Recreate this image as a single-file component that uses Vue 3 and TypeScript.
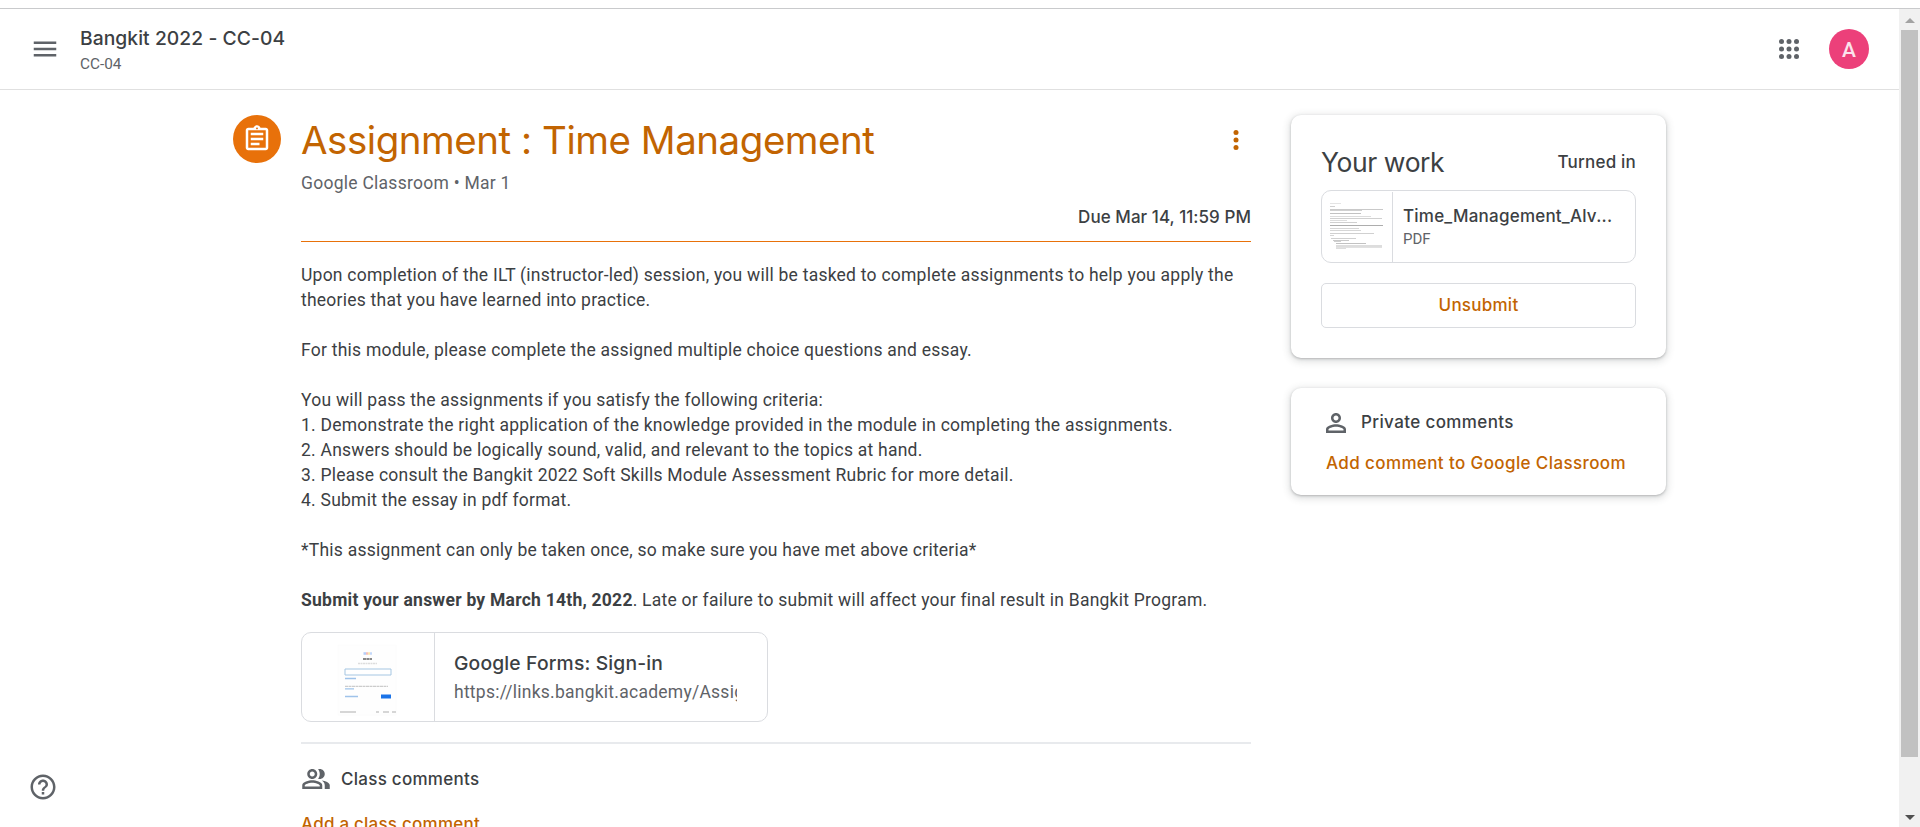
<script setup lang="ts">
interface ThumbLine { x: number; y: number; w: number; o: number }

const description: string[] = [
  'Upon completion of the ILT (instructor-led) session, you will be tasked to complete assignments to help you apply the theories that you have learned into practice.',
  '',
  'For this module, please complete the assigned multiple choice questions and essay.',
  '',
  'You will pass the assignments if you satisfy the following criteria:',
  '1. Demonstrate the right application of the knowledge provided in the module in completing the assignments.',
  '2. Answers should be logically sound, valid, and relevant to the topics at hand.',
  '3. Please consult the Bangkit 2022 Soft Skills Module Assessment Rubric for more detail.',
  '4. Submit the essay in pdf format.',
  '',
  '*This assignment can only be taken once, so make sure you have met above criteria*',
  '',
]

// Tiny text rows of the PDF preview
const thumbLines: ThumbLine[] = [
  { x: 8, y: 13, w: 11, o: 0.2 }, { x: 8, y: 16, w: 5, o: 0.35 },
  { x: 8, y: 19, w: 53, o: 0.4 }, { x: 8, y: 20, w: 32, o: 0.35 },
  { x: 8, y: 23, w: 31, o: 0.45 }, { x: 8, y: 26, w: 41, o: 0.25 },
  { x: 8, y: 28, w: 52, o: 0.35 }, { x: 8, y: 30, w: 17, o: 0.25 },
  { x: 8, y: 32, w: 27, o: 0.35 }, { x: 8, y: 35, w: 53, o: 0.6 },
  { x: 8, y: 38, w: 29, o: 0.3 }, { x: 8, y: 40, w: 31, o: 0.3 },
  { x: 8, y: 43, w: 44, o: 0.35 }, { x: 8, y: 45, w: 4, o: 0.3 },
  { x: 9, y: 48, w: 25, o: 0.35 }, { x: 11, y: 50, w: 16, o: 0.4 },
  { x: 12, y: 51, w: 7, o: 0.35 }, { x: 14, y: 53, w: 30, o: 0.45 },
  { x: 14, y: 55, w: 46, o: 0.25 }, { x: 14, y: 56, w: 46, o: 0.25 },
  { x: 14, y: 57, w: 46, o: 0.22 }, { x: 14, y: 58, w: 10, o: 0.25 },
]
</script>

<template>
  <div class="window">
    <div class="viewport">
      <div class="page">
        <header class="topbar">
          <svg class="icon" viewBox="0 0 24 24"><path d="M3 18h18v-2H3v2zm0-5h18v-2H3v2zm0-7v2h18V6H3z" /></svg>
          <div class="course">
            <div class="course-name">Bangkit 2022 - CC-04</div>
            <div class="course-section">CC-04</div>
          </div>
          <svg class="icon apps" viewBox="0 0 24 24">
            <template v-for="cy in [6, 12, 18]" :key="cy">
              <circle v-for="cx in [6, 12, 18]" :key="cx" :cx="cx" :cy="cy" r="2" />
            </template>
          </svg>
          <div class="avatar">A</div>
        </header>

        <div class="content">
          <div class="badge">
            <svg viewBox="0 0 24 24">
              <path d="M7 15h7v2H7zm0-4h10v2H7zm0-4h10v2H7z" />
              <path d="M19 3h-4.180C14.400 1.840 13.300 1 12 1s-2.400.84-2.820 2H5c-1.100 0-2 .9-2 2v14c0 1.100.9 2 2 2h14c1.100 0 2-.9 2-2V5c0-1.100-.9-2-2-2zm-7-.25c.41 0 .75.34.75.75s-.34.75-.75.75-.75-.34-.75-.75.34-.75.75-.75zM19 19H5V5h14v14z" />
            </svg>
          </div>

          <main class="main">
            <div class="title-row">
              <h1>Assignment : Time Management</h1>
              <svg class="more" viewBox="0 0 24 24"><circle cx="12" cy="6" r="2" /><circle cx="12" cy="12" r="2" /><circle cx="12" cy="18" r="2" /></svg>
            </div>
            <div class="author">Google Classroom • Mar 1</div>
            <div class="due">Due Mar 14, 11:59 PM</div>

            <div class="description">
              <div v-for="(line, i) in description" :key="i" class="line">{{ line }}</div>
              <div class="line"><b>Submit your answer by March 14th, 2022</b>. Late or failure to submit will affect your final result in Bangkit Program.</div>
            </div>

            <div class="file-card">
              <div class="file-thumb">
                <svg viewBox="0 0 132 88">
                  <path d="M36 12h58v70H36z" fill="#fefefe" stroke="#fcfcfc" />
                  <g stroke-width="2.600" opacity=".5">
                    <path d="M61.500 20.500h2.500" stroke="#6fa0f5" /><path d="M64 20.500h2" stroke="#ea8078" /><path d="M66 20.500h2" stroke="#f9cf60" /><path d="M68 20.500h2" stroke="#8ab4f8" />
                  </g>
                  <path d="M61 26h9" stroke="#888" stroke-width="1.800" stroke-dasharray="3 .4" />
                  <path d="M56 30.500h19" stroke="#ddd" stroke-width="1.400" stroke-dasharray="2 .5" />
                  <path d="M43 36h46v6H43z" fill="#fff" stroke="#a5c6e2" />
                  <path d="M43 45.500h11M43 55.800h9M43 63.500h13" stroke="#9fc3ea" stroke-width="1.300" />
                  <path d="M43 53.300h43" stroke="#ccc" stroke-width="1.300" stroke-dasharray="3 .5" />
                  <path d="M79 61.500h10v4H79z" fill="#1a73e8" />
                  <path d="M38 79h16M74 79h3M81 79h6M90 79h4" stroke="#c9c9c9" stroke-width="1.300" />
                </svg>
              </div>
              <div class="file-info">
                <div class="file-name">Google Forms: Sign-in</div>
                <div class="file-url">https://links.bangkit.academy/Assig</div>
              </div>
            </div>

            <section class="class-comments">
              <div class="comments-head">
                <svg class="icon" viewBox="0 0 24 24">
                  <path d="M16.670 13.130C18.040 14.060 19 15.320 19 17v3h4v-3c0-2.180-3.570-3.470-6.330-3.870zM15 12c2.210 0 4-1.790 4-4s-1.790-4-4-4c-.47 0-.91.1-1.330.24C14.500 5.270 15 6.580 15 8s-.5 2.730-1.330 3.760c.42.14.86.24 1.330.24z" />
                  <path d="M9 12c2.210 0 4-1.790 4-4s-1.790-4-4-4-4 1.790-4 4 1.790 4 4 4zm0-6c1.100 0 2 .9 2 2s-.9 2-2 2-2-.9-2-2 .9-2 2-2zm0 7c-2.670 0-8 1.340-8 4v3h16v-3c0-2.660-5.330-4-8-4zm6 5H3v-.99C3.200 16.290 6.300 15 9 15s5.800 1.290 6 2v1z" />
                </svg>
                <span class="class-label">Class comments</span>
              </div>
              <div class="add-class">Add a class comment</div>
            </section>
          </main>

          <aside class="side">
            <section class="card work">
              <div class="work-head">
                <h2>Your work</h2>
                <span class="state">Turned in</span>
              </div>
              <div class="attachment">
                <div class="pdf-thumb">
                  <svg viewBox="0 0 70 71">
                    <rect v-for="(l, i) in thumbLines" :key="i" :x="l.x" :y="l.y - 1" :width="l.w" height="1" :opacity="l.o" />
                  </svg>
                </div>
                <div class="pdf-info">
                  <div class="pdf-name">Time_Management_Alv...</div>
                  <div class="pdf-type">PDF</div>
                </div>
              </div>
              <button class="unsubmit">Unsubmit</button>
            </section>

            <section class="card private">
              <div class="private-head">
                <svg class="icon" viewBox="0 0 24 24"><path d="M12 4C9.790 4 8 5.790 8 8s1.790 4 4 4 4-1.790 4-4-1.790-4-4-4zm0 6c-1.100 0-2-.9-2-2s.9-2 2-2 2 .9 2 2-.9 2-2 2zM12 13c-2.670 0-8 1.340-8 4v3h16v-3c0-2.660-5.330-4-8-4zm6 5H6v-.99C6.200 16.290 9.300 15 12 15s5.800 1.290 6 2v1z" /></svg>
                <span>Private comments</span>
              </div>
              <div class="add-private">Add comment to Google Classroom</div>
            </section>
          </aside>
        </div>

        <svg class="icon help" viewBox="0 0 24 24"><path d="M11 18h2v-2h-2v2zm1-16C6.480 2 2 6.480 2 12s4.480 10 10 10 10-4.480 10-10S17.520 2 12 2zm0 18c-4.410 0-8-3.590-8-8s3.590-8 8-8 8 3.590 8 8-3.590 8-8 8zm0-14c-2.210 0-4 1.790-4 4h2c0-1.100.9-2 2-2s2 .9 2 2c0 2-3 1.750-3 5h2c0-2.250 3-2.500 3-5 0-2.210-1.790-4-4-4z" /></svg>
      </div>

      <div class="scrollbar">
        <svg class="arrow up" viewBox="0 0 10 5"><path d="M0 5L5 0l5 5z" /></svg>
        <div class="thumb"></div>
        <svg class="arrow down" viewBox="0 0 10 5"><path d="M0 0h10L5 5z" /></svg>
      </div>
    </div>
  </div>
</template>

<style>
body { background: #fff; overflow: hidden; }
</style>

<style scoped>
* { box-sizing: border-box; }
.window { width: 1920px; height: 827px; padding-top: 8px; overflow: hidden; color: #3c4043; font-family: Inter, "Open Sans", sans-serif; font-size: 17px; font-weight: 450; line-height: 24px; }
.viewport { display: flex; height: 819px; border-top: 1px solid #c9cacc; }
.page { position: relative; flex: 1; height: 818px; overflow: hidden; }
svg { display: block; }
.icon { width: 30px; height: 30px; fill: #5f6368; flex: none; }

.topbar { display: flex; align-items: center; height: 81px; padding: 0 30px; border-bottom: 1px solid #e0e0e0; }
.course { margin-left: 20px; padding-top: 1px; }
.course-name { font-size: 19.3px; letter-spacing: 0.05px; }
.course-section { margin-top: 4px; font: 400 15.3px/20px Roboto, sans-serif; color: #5f6368; }
.apps { margin-left: auto; }
.avatar { display: flex; align-items: center; justify-content: center; width: 40px; height: 40px; margin-left: 25px; padding-top: 2px; border-radius: 50%; background: #ec407a; color: #fbe3ec; font: 500 21px/24px Roboto, sans-serif; }

.content { display: flex; align-items: flex-start; padding: 25px 0 0 233px; }
.badge { display: flex; align-items: center; justify-content: center; width: 48px; height: 48px; border-radius: 50%; background: #e8710a; }
.badge svg { width: 30px; height: 30px; fill: #fff; }
.main { width: 950px; margin-left: 20px; }
.title-row { display: flex; justify-content: space-between; height: 50px; }
h1 { margin: 0; font-size: 38.5px; font-weight: 400; line-height: 50px; letter-spacing: -0.47px; color: #c26401; white-space: nowrap; }
.more { width: 30px; height: 30px; margin-top: 10px; fill: #c26401; }
.author { margin-top: 6px; font: 400 17.5px/25px Roboto, sans-serif; letter-spacing: 0.26px; color: #5f6368; }
.due { margin-top: 9px; padding-bottom: 12px; border-bottom: 1px solid #e8710a; letter-spacing: 0.05px; text-align: right; }
.description { margin-top: 21px; font: 400 17.5px/25px Roboto, sans-serif; letter-spacing: 0.24px; }
.line { min-height: 25px; }
b { font-weight: 700; }

.file-card { display: flex; width: 467px; height: 90px; margin-top: 19px; border: 1px solid #dadce0; border-radius: 10px; overflow: hidden; }
.file-thumb { width: 133px; border-right: 1px solid #dadce0; }
.file-info { display: flex; flex-direction: column; gap: 5px; width: 302px; padding: 18px 0 0 19px; overflow: hidden; }
.file-name { font-size: 19.3px; letter-spacing: 0.16px; white-space: nowrap; }
.file-url { font: 400 17.5px/24px Roboto, sans-serif; letter-spacing: 0.25px; color: #5f6368; white-space: nowrap; overflow: hidden; }

.class-comments { margin-top: 20px; padding-top: 20px; border-top: 2px solid #e8eaed; }
.comments-head { display: flex; gap: 10px; }
.class-label { margin-top: 3px; letter-spacing: 0.27px; }
.add-class { margin-top: 18px; letter-spacing: 0.23px; color: #c26401; }

.side { width: 375px; margin-left: 40px; }
.card { border-radius: 10px; background: #fff; box-shadow: 0 1px 2.5px rgba(60, 64, 67, .3), 0 2px 7px 2px rgba(60, 64, 67, .15); }
.work { height: 243px; padding: 30px; }
.work-head { display: flex; align-items: center; justify-content: space-between; }
h2 { margin: 0; font-size: 26.5px; font-weight: 400; line-height: 34px; letter-spacing: -0.42px; }
.state { letter-spacing: 0.2px; }
.attachment { display: flex; height: 73px; margin-top: 11px; border: 1px solid #dadce0; border-radius: 10px; overflow: hidden; }
.pdf-thumb { width: 71px; margin-top: 1px; border-right: 1px solid #dadce0; }
.pdf-thumb svg { width: 70px; height: 71px; margin-top: -1px; fill: #777; }
.pdf-info { display: flex; flex-direction: column; justify-content: center; gap: 1px; padding-left: 10px; }
.pdf-name { letter-spacing: 0.22px; white-space: nowrap; }
.pdf-type { font: 400 15px/20px Roboto, sans-serif; color: #5f6368; }
.unsubmit { display: block; width: 100%; height: 45px; margin-top: 20px; padding: 0 0 2px; border: 1px solid #dadce0; border-radius: 5px; background: #fff; color: #c26401; font: inherit; letter-spacing: 0.25px; }
.private { height: 107px; margin-top: 30px; padding: 20px 30px; }
.private-head { display: flex; gap: 10px; letter-spacing: 0.38px; }
.private-head span { margin-top: 2px; }
.add-private { margin: 13px 0 0 5px; letter-spacing: 0.39px; color: #c26401; white-space: nowrap; }

/* Floats over the page at its lower left corner */
.help { position: absolute; left: 28px; bottom: 25px; }

.scrollbar { display: flex; flex-direction: column; align-items: center; width: 21px; background: #f1f1f1; }
.arrow { width: 10px; height: 5px; }
.up { margin-top: 9px; fill: #a3a3a3; }
.thumb { width: 17px; height: 727px; margin-top: 7px; background: #c1c1c1; }
.down { margin-top: auto; margin-bottom: 7px; fill: #505050; }
</style>
